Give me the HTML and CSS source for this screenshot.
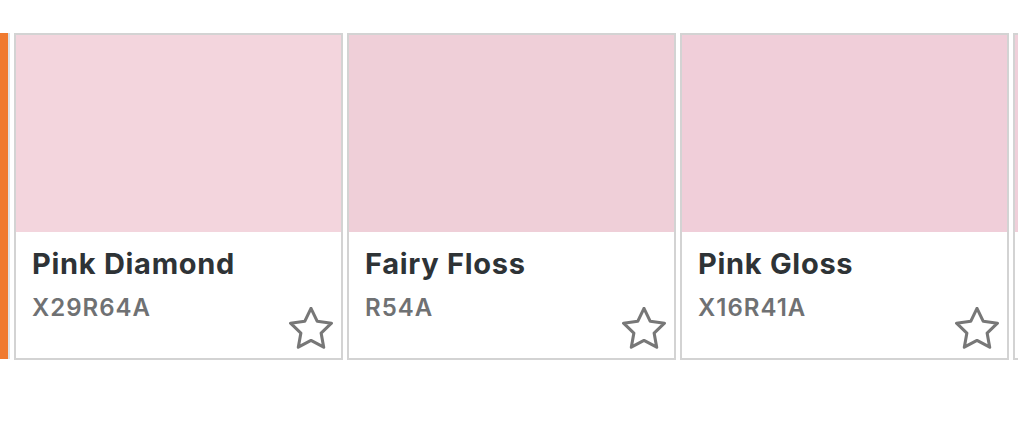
FILE: index.html
```html
<!DOCTYPE html>
<html>
<head>
<meta charset="utf-8">
<link rel="stylesheet" href="styles.css">
</head>
<body>
<div class="row">
  <div class="prev-card"></div>
  <div class="card">
    <div class="swatch swatch-1"></div>
    <div class="info">
      <div class="name">Pink Diamond</div>
      <div class="code">X29R64A</div>
      <svg class="star" viewBox="2 2 20 20" width="44" height="44"><path d="M12 2.6l2.85 5.9 6.45.86-4.7 4.5 1.17 6.42L12 17.2l-5.77 3.08 1.17-6.42-4.7-4.5 6.45-.86z" fill="none" stroke="#777" stroke-width="1.4" stroke-linejoin="round"/></svg>
    </div>
  </div>
  <div class="card">
    <div class="swatch swatch-2"></div>
    <div class="info">
      <div class="name">Fairy Floss</div>
      <div class="code">R54A</div>
      <svg class="star" viewBox="2 2 20 20" width="44" height="44"><path d="M12 2.6l2.85 5.9 6.45.86-4.7 4.5 1.17 6.42L12 17.2l-5.77 3.08 1.17-6.42-4.7-4.5 6.45-.86z" fill="none" stroke="#777" stroke-width="1.4" stroke-linejoin="round"/></svg>
    </div>
  </div>
  <div class="card">
    <div class="swatch swatch-3"></div>
    <div class="info">
      <div class="name">Pink Gloss</div>
      <div class="code">X16R41A</div>
      <svg class="star" viewBox="2 2 20 20" width="44" height="44"><path d="M12 2.6l2.85 5.9 6.45.86-4.7 4.5 1.17 6.42L12 17.2l-5.77 3.08 1.17-6.42-4.7-4.5 6.45-.86z" fill="none" stroke="#777" stroke-width="1.4" stroke-linejoin="round"/></svg>
    </div>
  </div>
  <div class="card">
    <div class="swatch swatch-4"></div>
    <div class="info"></div>
  </div>
</div>
</body>
</html>
```
FILE: styles.css
```css
html, body {
  margin: 0;
  padding: 0;
  background: #ffffff;
  overflow: hidden;
}
body {
  width: 1018px;
  height: 422px;
  font-family: Inter, "Noto Sans", sans-serif;
}
.row {
  display: flex;
  gap: 4px;
  padding-top: 33px;
}
.prev-card {
  flex: 0 0 8px;
  height: 326px;
  background: #f07a30;
  border-right: 2px solid #dfe3e6;
}
.card {
  flex: 0 0 329px;
  height: 327px;
  box-sizing: border-box;
  border: 2px solid #d3d3d3;
  display: flex;
  flex-direction: column;
}
.swatch {
  height: 197px;
  flex: 0 0 197px;
}
.swatch-1 { background: #f3d5dd; }
.swatch-2 { background: #efcfd8; }
.swatch-3 { background: #f0ced9; }
.swatch-4 { background: #f0d0da; }
.info {
  flex: 1;
  position: relative;
  padding: 14px 0 0 16px;
}
.name {
  font-size: 29px;
  font-weight: 700;
  color: #2e3336;
  line-height: 36px;
  letter-spacing: 0.7px;
}
.code {
  font-size: 24px;
  font-weight: 600;
  color: #6f7173;
  line-height: 30px;
  letter-spacing: 1px;
  margin-top: 11px;
}
.star {
  position: absolute;
  right: 8px;
  bottom: 7px;
}
```
